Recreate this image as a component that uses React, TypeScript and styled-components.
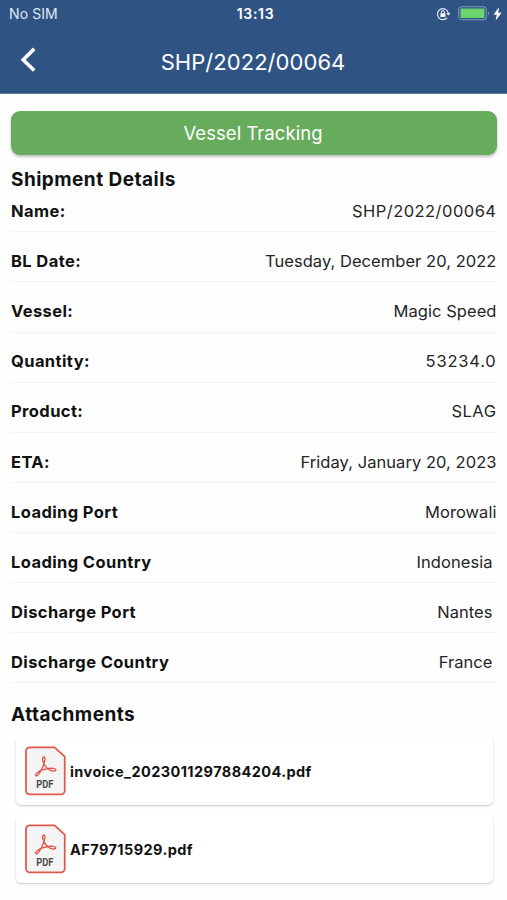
import styled, { createGlobalStyle } from 'styled-components';

const details = [
  { label: 'Name:', value: 'SHP/2022/00064', tracking: 0.47 },
  { label: 'BL Date:', value: 'Tuesday, December 20, 2022' },
  { label: 'Vessel:', value: 'Magic Speed' },
  { label: 'Quantity:', value: '53234.0', tracking: 0.8 },
  { label: 'Product:', value: 'SLAG', tracking: 0.5 },
  { label: 'ETA:', value: 'Friday, January 20, 2023' },
  { label: 'Loading Port', value: 'Morowali' },
  { label: 'Loading Country', value: 'Indonesia', inset: true },
  { label: 'Discharge Port', value: 'Nantes', inset: true },
  { label: 'Discharge Country', value: 'France', inset: true },
];

const attachments = ['invoice_2023011297884204.pdf', 'AF79715929.pdf'];

const RotationLockIcon = () => (
  <svg width="15" height="14" viewBox="0 0 15 14" fill="none">
    <path d="M11.2 10.6A5.5 5.5 0 1 1 12.3 6" stroke="#dfe8f3" strokeWidth="1.2" />
    <path d="M10.2 6h4.2l-2.1 2.7z" fill="#dfe8f3" />
    <rect x="4.4" y="6.2" width="5" height="3.9" rx="0.6" fill="#fff" />
    <path d="M5.4 6.4V5.1a1.5 1.5 0 0 1 3 0v1.3" stroke="#fff" strokeWidth="1" />
  </svg>
);

const BatteryIcon = () => (
  <svg width="32" height="15" viewBox="0 0 32 15" fill="none">
    <rect x="0.7" y="0.7" width="27.6" height="13" rx="3.4" stroke="#7f9bb9" strokeWidth="1.1" />
    <rect x="2.5" y="2.4" width="24" height="9.6" rx="1.2" fill="#6dd56b" />
    <path d="M30 5.2c1.4.5 1.4 3.5 0 4z" fill="#7f9bb9" />
  </svg>
);

const BoltIcon = () => (
  <svg width="9" height="14" viewBox="0 0 8 13">
    <path d="M5.4 0.2 0.2 7.2h3.1L2.3 12.6 7.8 5.4H4.7z" fill="#fff" />
  </svg>
);

const PdfIcon = () => (
  <PdfDrawing viewBox="0 0 42 51" fill="none">
    <path
      d="M5 1.2h25.3L40.7 10.8V45.5a4 4 0 0 1-4 4H5a4 4 0 0 1-4-4V5.2a4 4 0 0 1 4-4z"
      fill="#f4f4f4"
      stroke="#e0584c"
      strokeWidth="1.8"
    />
    <path
      d="M19.4 11.2c-1.6-.2-1.8 2.1-.9 4.6 1.1 3.3 3.9 7.3 7.5 9 2.4 1.1 5.7 1 5.6-.5-.1-1.7-4.2-1.9-7.9-1.4-4.3.6-9 2.5-11.4 4.6-1.6 1.4-1.9 2.8-.8 3 1.8.3 4.6-4.4 6.5-8.8 1.8-4.1 3.5-10.2 1.4-10.5z"
      stroke="#e0584c"
      strokeWidth="1.4"
      strokeLinejoin="round"
    />
    <text
      x="20.4"
      y="43.2"
      textAnchor="middle"
      textLength="17.5"
      lengthAdjust="spacingAndGlyphs"
      fill="#444"
      stroke="#444"
      strokeWidth="0.2"
      fontFamily="Roboto, sans-serif"
      fontSize="11.5"
      fontWeight="500"
    >
      PDF
    </text>
  </PdfDrawing>
);

const App = () => {
  return (
    <Screen>
      <GlobalStyle />
      <Header>
        <StatusBar>
          <Carrier>No SIM</Carrier>
          <Clock>13:13</Clock>
          <StatusIcons>
            <RotationLockIcon />
            <BatteryIcon />
            <BoltIcon />
          </StatusIcons>
        </StatusBar>
        <NavBar>
          <BackButton aria-label="Back">
            <svg width="17" height="26" viewBox="0 0 17 26" fill="none">
              <path d="M14.2 1.9 3.2 12.7l11 10.8" stroke="#fff" strokeWidth="3.6" />
            </svg>
          </BackButton>
          <NavTitle>SHP/2022/00064</NavTitle>
        </NavBar>
      </Header>
      <Content>
        <TrackingButton>Vessel Tracking</TrackingButton>
        <SectionTitle>Shipment Details</SectionTitle>
        <DetailList>
          {details.map(({ label, value, inset, tracking }) => (
            <DetailRow key={label}>
              <DetailLabel>{label}</DetailLabel>
              <DetailValue $inset={inset} $tracking={tracking}>
                {value}
              </DetailValue>
            </DetailRow>
          ))}
        </DetailList>
        <AttachmentsTitle>Attachments</AttachmentsTitle>
        <AttachmentList>
          {attachments.map((name) => (
            <AttachmentCard key={name}>
              <PdfIcon />
              <FileName>{name}</FileName>
            </AttachmentCard>
          ))}
        </AttachmentList>
      </Content>
    </Screen>
  );
};

const GlobalStyle = createGlobalStyle`
  * {
    box-sizing: border-box;
  }

  body {
    margin: 0;
    background-color: #fefefe;
    font-family: Inter, 'Liberation Sans', sans-serif;
  }
`;

const Screen = styled.div`
  width: 100%;
  height: 900px;
  overflow: hidden;
  color: #111;
`;

const Header = styled.header`
  height: 94px;
  background-color: #2f5483;
  border-bottom: 1px solid #5b7ba3;
  color: #fff;
`;

const StatusBar = styled.div`
  display: grid;
  grid-template-columns: 1fr auto 1fr;
  align-items: center;
  height: 27px;
  padding: 0 5px 0 9px;
`;

const Carrier = styled.span`
  color: #dfe8f3;
  font-size: 14px;
  letter-spacing: 0.1px;
`;

const Clock = styled.span`
  font-size: 14px;
  font-weight: 600;
  letter-spacing: 0.7px;
`;

const StatusIcons = styled.div`
  display: flex;
  justify-content: flex-end;
  align-items: center;
  gap: 3px;

  svg:first-child {
    margin-right: 4px;
  }
`;

const NavBar = styled.div`
  display: grid;
  grid-template-columns: 60px 1fr 60px;
  align-items: center;
  height: 67px;
`;

const BackButton = styled.button`
  display: flex;
  align-items: center;
  height: 32px;
  margin-bottom: 1px;
  padding: 0 0 0 19.5px;
  border: none;
  background: none;
`;

const NavTitle = styled.h1`
  margin: 3px 1px 0 0;
  font-size: 22px;
  font-weight: 400;
  letter-spacing: 0.05px;
  text-align: center;
`;

const Content = styled.main`
  padding: 17px 10px 0 11px;
`;

const TrackingButton = styled.button`
  display: block;
  width: 100%;
  height: 44px;
  padding: 0 2px 0 0;
  border: none;
  border-radius: 9px;
  background-color: #67ac5c;
  box-shadow: 0 2px 3px rgba(0, 0, 0, 0.25);
  color: #fff;
  font-family: inherit;
  font-size: 18.5px;
  letter-spacing: 0.05px;
`;

const SectionTitle = styled.h2`
  margin: 12px 0 -1px;
  font-size: 19px;
  font-weight: 700;
  line-height: 26px;
  letter-spacing: 0.47px;
`;

const DetailList = styled.div`
  display: flex;
  flex-direction: column;
`;

const DetailRow = styled.div`
  display: flex;
  justify-content: space-between;
  align-items: flex-end;
  height: 50.1px;
  padding-bottom: 9.3px;
  border-bottom: 1px solid #f4f4f4;
  font-size: 16.5px;
  line-height: 22px;

  &:first-child {
    height: 40.4px;
  }
`;

const DetailLabel = styled.span`
  font-weight: 700;
  letter-spacing: 0.4px;
`;

const DetailValue = styled.span<{ $inset?: boolean; $tracking?: number }>`
  padding-right: ${({ $inset }) => ($inset ? '4.5px' : '0.5px')};
  color: #252525;
  letter-spacing: ${({ $tracking = 0.05 }) => $tracking}px;
`;

const AttachmentsTitle = styled(SectionTitle)`
  margin-top: 18.6px;
  margin-bottom: -1.6px;
`;

const AttachmentList = styled.div`
  display: flex;
  flex-direction: column;
  gap: 10px;
  padding: 11px 4px 0 5px;
`;

const AttachmentCard = styled.div`
  display: flex;
  align-items: center;
  gap: 4px;
  height: 68px;
  padding: 0 9px;
  border-radius: 5px;
  background-color: #fff;
  box-shadow: 0 1px 2px rgba(0, 0, 0, 0.22);
  clip-path: inset(0 -4px -4px);
`;

const PdfDrawing = styled.svg`
  flex: none;
  width: 41px;
  height: 50px;
`;

const FileName = styled.span`
  margin-top: 1px;
  font-size: 14.5px;
  font-weight: 700;
  letter-spacing: 0.42px;
`;

export default App;
